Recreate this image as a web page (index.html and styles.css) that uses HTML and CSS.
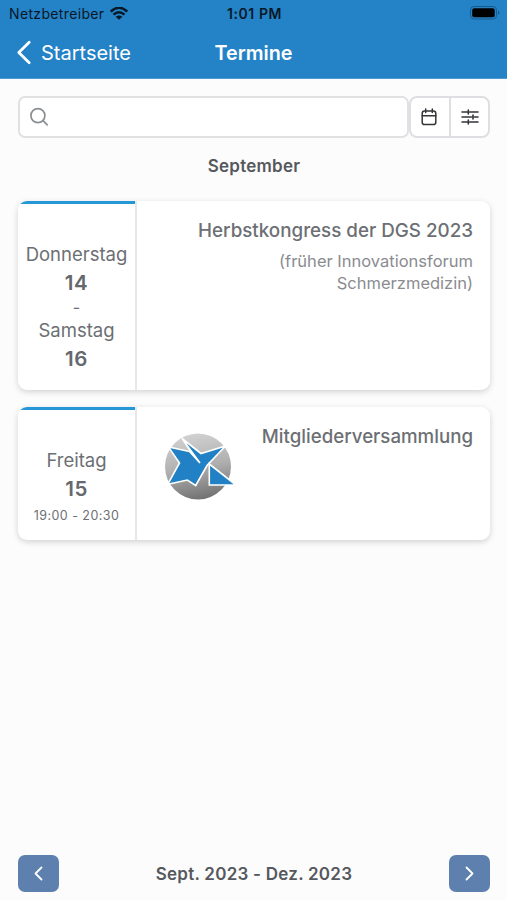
FILE: index.html
```html
<!DOCTYPE html>
<html lang="de">
<head>
<meta charset="utf-8">
<title>Termine</title>
<link rel="stylesheet" href="styles.css">
</head>
<body>
<header class="header">
  <div class="status">
    <div class="carrier"><span>Netzbetreiber</span>
      <svg width="18" height="14" viewBox="0 0 18 14" fill="none" stroke="#071827" stroke-width="2.4"><path d="M.8 4.500Q9-3.100 17.200 4.500M3.500 7.600Q9 2.800 14.500 7.600"/><path d="M5.700 9.800Q9 7.200 12.300 9.800L9 12.800Z" fill="#071827" stroke="none"/></svg>
    </div>
    <time class="clock">1:01 PM</time>
    <svg class="battery" width="30" height="14" viewBox="0 0 30 14"><rect x=".5" y=".5" width="26" height="12.5" rx="3.5" fill="none" stroke="#175b8c"/><rect x="2.2" y="2.3" width="22.5" height="9" rx="2" fill="#000"/><path d="M28 4.7q3 2 0 4z" fill="#175b8c"/></svg>
  </div>
  <nav class="nav">
    <a class="back"><svg width="16" height="26" viewBox="0 0 16 26" fill="none" stroke="#fff" stroke-width="2.8" stroke-linecap="round" stroke-linejoin="round"><path d="M13.2 2.2 2.8 12.500l10.400 10.300"/></svg><span>Startseite</span></a>
    <h1>Termine</h1>
  </nav>
</header>
<main>
  <div class="tools">
    <div class="search"><svg width="20" height="20" viewBox="0 0 20 20" fill="none" stroke="#8b8e91" stroke-width="1.7" stroke-linecap="round"><circle cx="7.900" cy="8.6" r="7"/><path d="m13 13.700 4.200 4.200"/></svg></div>
    <div class="group">
      <button aria-label="Kalender"><svg width="16" height="18" viewBox="0 0 16 18" fill="none" stroke="#333538" stroke-width="1.5" stroke-linecap="round"><rect x="1.2" y="3" width="13.6" height="13.6" rx="2.4"/><path d="M1.2 7.7h13.6M4.7 1v3.4M11.3 1v3.4"/></svg></button>
      <button aria-label="Filter"><svg width="18" height="16" viewBox="0 0 18 16" fill="none" stroke="#333538" stroke-width="1.6" stroke-linecap="round"><path d="M1 3h5M8.700 3H17M1 8h9.500M13.500 8H17M1 13h5M8.700 13H17M7.300 1v4M12 6v4M7.300 11v4"/></svg></button>
    </div>
  </div>
  <h2>September</h2>
  <article class="card card-long">
    <div class="date"><span class="day">Donnerstag</span><b>14</b><span class="dash">-</span><span class="day">Samstag</span><b>16</b></div>
    <div class="info"><div class="copy"><h3>Herbstkongress der DGS 2023</h3><p>(früher Innovationsforum<br>Schmerzmedizin)</p></div></div>
  </article>
  <article class="card card-short">
    <div class="date"><span class="day">Freitag</span><b>15</b><span class="time">19:00 - 20:30</span></div>
    <div class="info">
      <svg class="logo" width="74" height="70" viewBox="0 0 74 70"><defs><linearGradient id="disc" x1=".4" y1="0" x2=".6" y2="1"><stop offset="0" stop-color="#d2d2d2"/><stop offset=".5" stop-color="#b0b0b0"/><stop offset="1" stop-color="#707070"/></linearGradient></defs><circle cx="35" cy="35.5" r="33" fill="url(#disc)"/><g fill="#2181c4" stroke="#fff" stroke-width="1.6"><path d="M5.500 16 26.500 20.500 37 32 19 7.500 38 22.500 62.500 15 44 34.500 32.700 54.500 24.300 49 4.700 53.300 16.500 32Z"/><path d="M46.300 33 73 54H46.300Z"/></g><path d="m19 8 18 25L26.500 20.500z" fill="#fff"/></svg>
      <div class="copy"><h3 class="single">Mitgliederversammlung</h3></div>
    </div>
  </article>
</main>
<footer>
  <button aria-label="Zurück"><svg width="10" height="16" viewBox="0 0 10 16" fill="none" stroke="#fff" stroke-width="1.8" stroke-linecap="round" stroke-linejoin="round"><path d="M7.500 1.500 1.500 7.500l6 6"/></svg></button>
  <strong>Sept. 2023 - Dez. 2023</strong>
  <button aria-label="Weiter"><svg width="10" height="16" viewBox="0 0 10 16" fill="none" stroke="#fff" stroke-width="1.8" stroke-linecap="round" stroke-linejoin="round"><path d="m2.500 1.500 6 6-6 6"/></svg></button>
</footer>
</body>
</html>
```
FILE: styles.css
```css
* { box-sizing: border-box; }
body { margin: 0; height: 900px; display: flex; flex-direction: column; background: #fcfcfc; color: #6c6f73; font-family: Inter, sans-serif; overflow: hidden; }
h1, h2, h3, p { margin: 0; }
svg { display: block; flex: none; }
button { padding: 0; border: 0; display: flex; align-items: center; justify-content: center; }
.header { height: 79px; flex: none; background: #2482c7; border-bottom: 1px solid #4c9bd2; }
.status { height: 27px; padding: 0 7px 0 9px; display: grid; grid-template-columns: 1fr auto 1fr; align-items: center; color: #071827; font-size: 14px; }
.carrier { display: flex; align-items: center; gap: 6px; letter-spacing: .35px; }
.clock { font-weight: 600; font-size: 14px; letter-spacing: .6px; }
.battery { justify-self: end; margin-top: -1px; }
.nav { height: 52px; padding: 0 16px; display: grid; grid-template-columns: 1fr auto 1fr; align-items: center; color: #fff; }
.back { display: flex; align-items: center; gap: 9px; font-size: 20px; }
.nav h1 { font-size: 19.800px; font-weight: 600; }
main { flex: 1; padding: 17px 17px 0 18px; }
.tools { height: 42px; display: flex; }
.search { width: 391px; border: 2px solid #e0e1e3; border-radius: 7px; background: #fff; display: flex; align-items: center; padding-left: 10px; }
.group { width: 81px; border: 2px solid #dedfe2; border-radius: 8px; background: #fff; display: flex; }
.group button { width: 38px; padding-right: 2px; background: none; }
.group button + button { width: 39px; padding: 0; border-left: 2px solid #dedfe2; }
h2 { height: 63px; padding-top: 17px; line-height: 22px; text-align: center; font-size: 17px; font-weight: 600; letter-spacing: .25px; color: #55585c; }
.card { display: flex; background: #fff; border-radius: 9px; overflow: hidden; box-shadow: 0 2px 6px rgba(0,0,0,.17); }
.card-long { height: 189px; margin-bottom: 17px; }
.card-short { height: 133px; }
.date { width: 119px; flex: none; padding-top: 39px; border-right: 2px solid #e7e8e9; display: flex; flex-direction: column; align-items: center; background: linear-gradient(#2597d7, #2597d7) 0 0 / 100% 3px no-repeat; }
.day { font-size: 18.500px; line-height: 28px; }
.date b { font-size: 20.500px; font-weight: 600; line-height: 30px; letter-spacing: .5px; color: #65686c; }
.dash { font-size: 16px; line-height: 18px; }
.time { font-size: 12.500px; line-height: 23px; letter-spacing: .45px; }
.info { flex: 1; padding: 16px 17px 0 0; display: flex; }
.logo { margin: 8px 0 0 26px; }
.copy { flex: 1; text-align: right; white-space: nowrap; }
h3 { font-size: 18.800px; line-height: 28px; font-weight: 500; }
.single { font-size: 18.700px; }
p { margin-top: 5px; color: #8a8c90; font-size: 16.500px; line-height: 22px; }
footer { height: 53px; flex: none; padding: 8px 17px 8px 18px; display: flex; justify-content: space-between; align-items: center; }
footer button { width: 41px; height: 37px; border-radius: 7px; background: #5d80ae; }
footer strong { font-size: 17px; font-weight: 600; letter-spacing: .25px; color: #55585c; }
```
